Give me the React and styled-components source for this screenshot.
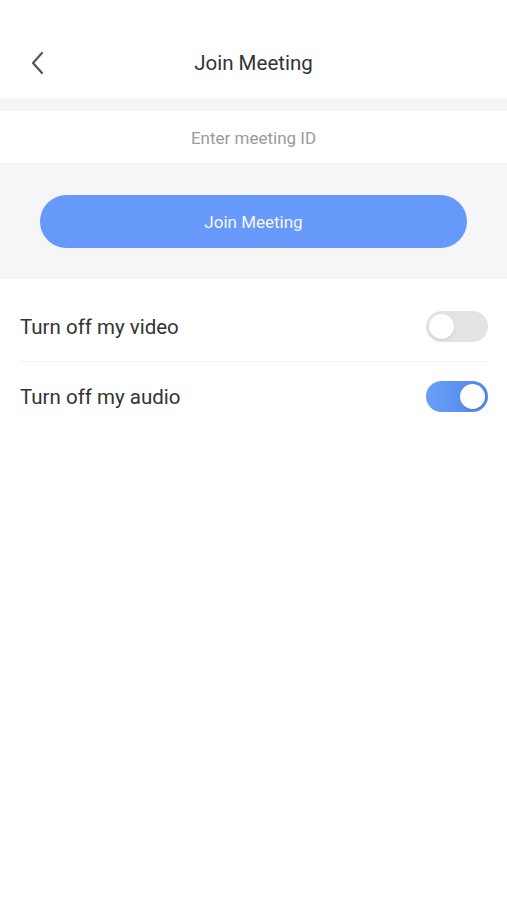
import React from "react";
import styled, { createGlobalStyle } from "styled-components";

const GlobalStyle = createGlobalStyle`
  html, body {
    margin: 0;
    padding: 0;
    background: #ffffff;
    font-family: Roboto, "Noto Sans", "Liberation Sans", sans-serif;
  }
  * { box-sizing: border-box; }
`;

const Page = styled.div`
  width: 507px;
  min-height: 900px;
  background: #fff;
`;

const Header = styled.div`
  position: relative;
  height: 98px;
  display: flex;
  align-items: center;
  justify-content: center;
  padding-top: 30px;
  padding-bottom: 2px;
`;

const BackButton = styled.button`
  position: absolute;
  left: 26px;
  top: 50px;
  width: 24px;
  height: 26px;
  padding: 0;
  border: none;
  background: none;
  display: flex;
  align-items: center;
  justify-content: center;
`;

const Title = styled.h1`
  margin: 0;
  font-size: 20.5px;
  font-weight: 400;
  color: #333;
`;

const Spacer = styled.div`
  height: ${(p) => p.h}px;
  background: #f5f6f8;
`;

const InputRow = styled.div`
  height: 52px;
  display: flex;
  align-items: center;
  justify-content: center;
  padding-top: 2px;
  background: #fff;
`;

const MeetingInput = styled.input`
  width: 100%;
  border: none;
  outline: none;
  text-align: center;
  font-family: inherit;
  font-size: 17px;
  color: #333;
  background: transparent;
  &::placeholder {
    color: #9a9a9a;
  }
`;

const ButtonArea = styled.div`
  background: #f5f6f8;
  padding: 32px 40px 31px 40px;
`;

const JoinButton = styled.button`
  width: 100%;
  height: 53px;
  border: none;
  border-radius: 27px;
  background: #6699fa;
  color: #f4f7ff;
  font-family: inherit;
  font-size: 17px;
`;

const OptionList = styled.div`
  padding: 13px 19px 0 20px;
`;

const OptionRow = styled.div`
  height: 70px;
  display: flex;
  align-items: center;
  justify-content: space-between;
  border-bottom: 1px solid ${(p) => (p.last ? "transparent" : "#f0f0f0")};
`;

const OptionLabel = styled.span`
  font-size: 20.5px;
  color: #333;
`;

const Toggle = styled.div`
  width: 62px;
  height: 31px;
  border-radius: 16px;
  padding: 3px;
  display: flex;
  justify-content: ${(p) => (p.on ? "flex-end" : "flex-start")};
  background: ${(p) =>
    p.on ? "linear-gradient(90deg, #6b9ef7, #4f86ee)" : "#e3e3e3"};
`;

const Knob = styled.div`
  width: 25px;
  height: 25px;
  border-radius: 50%;
  background: #fff;
  box-shadow: 0 1px 2px rgba(0, 0, 0, 0.12);
`;

const options = [
  { label: "Turn off my video", on: false },
  { label: "Turn off my audio", on: true },
];

const App = () => {
  return (
    <Page>
      <GlobalStyle />
      <Header>
        <BackButton aria-label="back">
          <svg width="16" height="24" viewBox="0 0 16 24" fill="none">
            <path
              d="M12 2 L3 12 L12 22"
              stroke="#555"
              strokeWidth="2.2"
              strokeLinecap="round"
              strokeLinejoin="round"
            />
          </svg>
        </BackButton>
        <Title>Join Meeting</Title>
      </Header>
      <Spacer h={13} />
      <InputRow>
        <MeetingInput placeholder="Enter meeting ID" />
      </InputRow>
      <ButtonArea>
        <JoinButton>Join Meeting</JoinButton>
      </ButtonArea>
      <OptionList>
        {options.map((opt, i) => (
          <OptionRow key={opt.label} last={i === options.length - 1}>
            <OptionLabel>{opt.label}</OptionLabel>
            <Toggle on={opt.on}>
              <Knob />
            </Toggle>
          </OptionRow>
        ))}
      </OptionList>
    </Page>
  );
};

export default App;
